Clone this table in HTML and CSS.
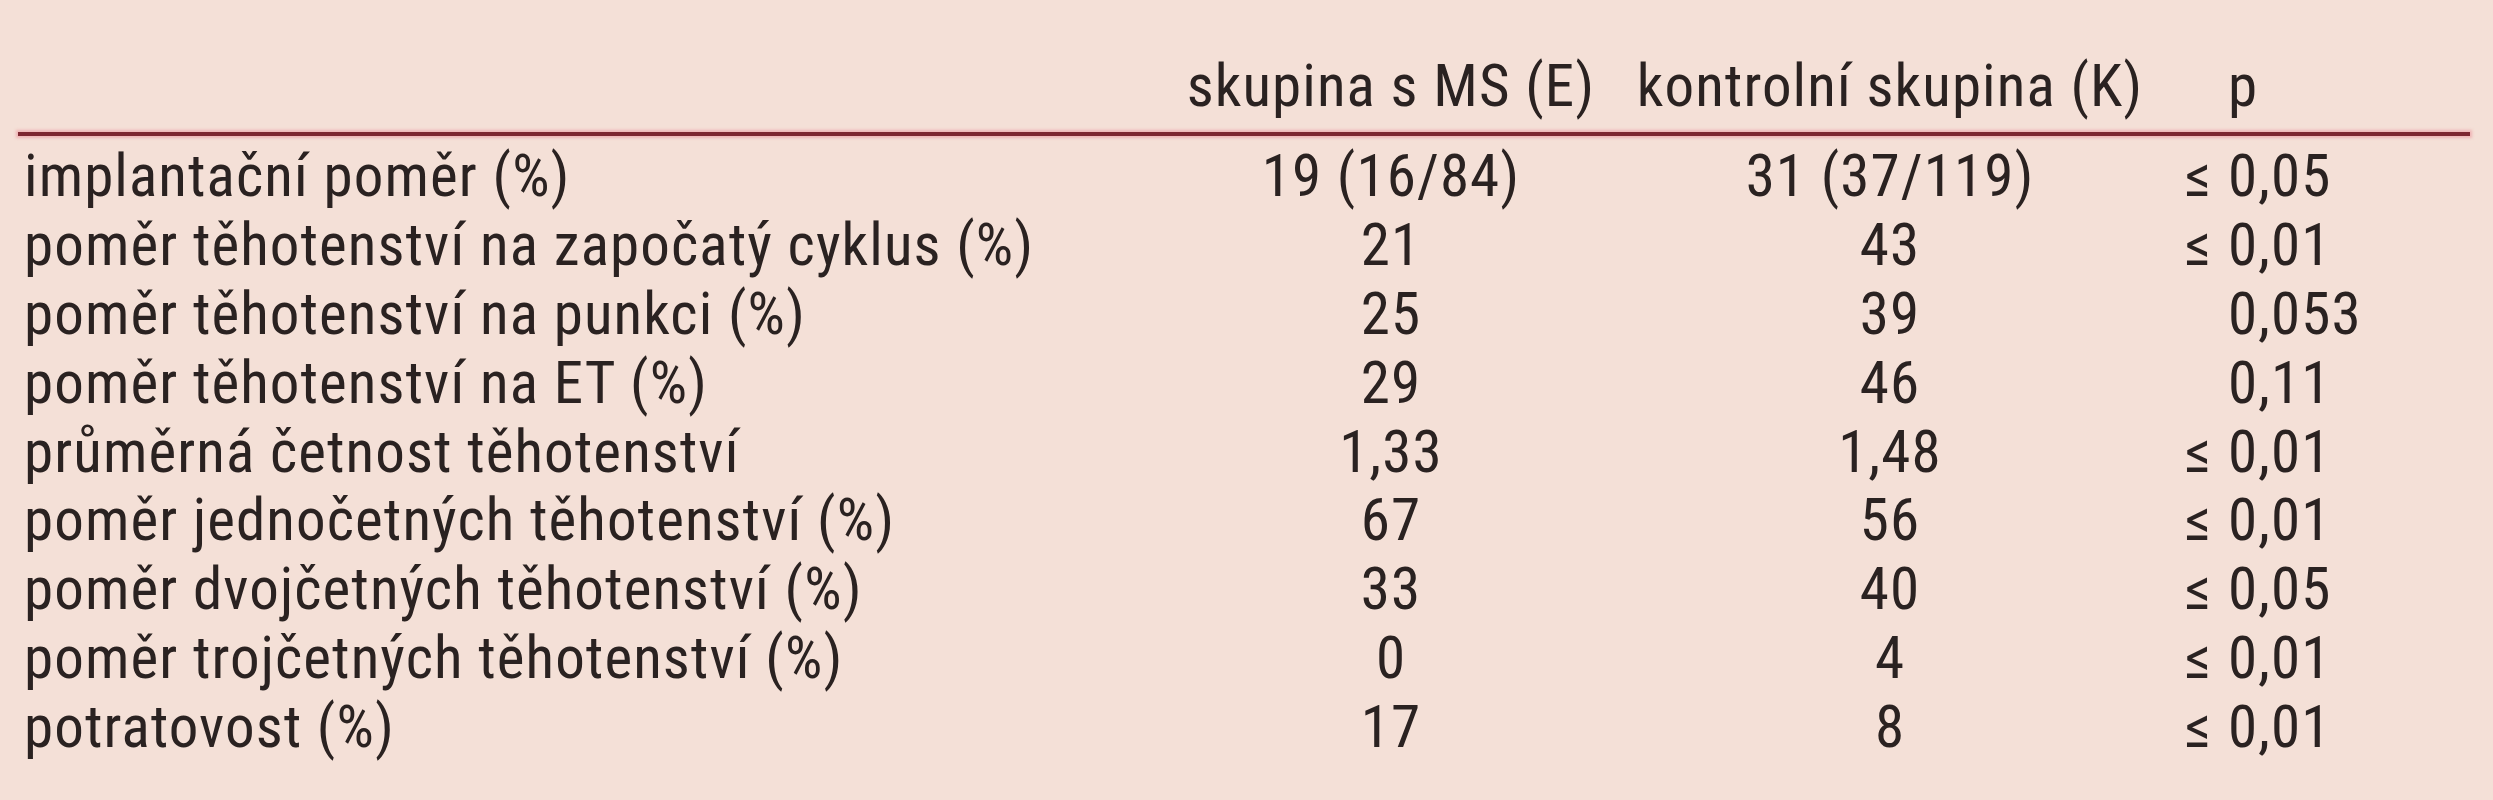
FILE: index.html
```html
<!DOCTYPE html>
<html lang="cs">
<head>
<meta charset="utf-8">
<title>Tabulka</title>
<link rel="stylesheet" href="styles.css">
</head>
<body>
<div class="table">
  <div class="row head">
    <div class="c1"></div>
    <div class="c2">skupina s MS (E)</div>
    <div class="c3">kontrolní skupina (K)</div>
    <div class="c4">p</div>
  </div>
  <div class="rule"></div>
  <div class="body">
    <div class="row"><div class="c1">implantační poměr (%)</div><div class="c2">19 (16/84)</div><div class="c3">31 (37/119)</div><div class="c4"><span class="le">≤</span>0,05</div></div>
    <div class="row"><div class="c1">poměr těhotenství na započatý cyklus (%)</div><div class="c2">21</div><div class="c3">43</div><div class="c4"><span class="le">≤</span>0,01</div></div>
    <div class="row"><div class="c1">poměr těhotenství na punkci (%)</div><div class="c2">25</div><div class="c3">39</div><div class="c4">0,053</div></div>
    <div class="row"><div class="c1">poměr těhotenství na ET (%)</div><div class="c2">29</div><div class="c3">46</div><div class="c4">0,11</div></div>
    <div class="row"><div class="c1">průměrná četnost těhotenství</div><div class="c2">1,33</div><div class="c3">1,48</div><div class="c4"><span class="le">≤</span>0,01</div></div>
    <div class="row"><div class="c1">poměr jednočetných těhotenství (%)</div><div class="c2">67</div><div class="c3">56</div><div class="c4"><span class="le">≤</span>0,01</div></div>
    <div class="row"><div class="c1">poměr dvojčetných těhotenství (%)</div><div class="c2">33</div><div class="c3">40</div><div class="c4"><span class="le">≤</span>0,05</div></div>
    <div class="row"><div class="c1">poměr trojčetných těhotenství (%)</div><div class="c2">0</div><div class="c3">4</div><div class="c4"><span class="le">≤</span>0,01</div></div>
    <div class="row"><div class="c1">potratovost (%)</div><div class="c2">17</div><div class="c3">8</div><div class="c4"><span class="le">≤</span>0,01</div></div>
  </div>
</div>
</body>
</html>
```

FILE: styles.css
```css
html, body {
  margin: 0;
  padding: 0;
  background: #f4e0d7;
}
body {
  width: 2493px;
  height: 800px;
  overflow: hidden;
  font-family: "Roboto Condensed", "Open Sans", sans-serif;
  font-weight: 400;
  font-size: 59px;
  letter-spacing: 1.1px;
  color: #2a2221;
}
.table {
  margin-left: 18px;
  width: 2452px;
  padding-top: 51px;
}
.row {
  display: grid;
  grid-template-columns: 1162px 422px 576px 292px;
  line-height: 69px;
  height: 69px;
  white-space: nowrap;
}
.body .row {
  line-height: 68.9px;
  height: 68.9px;
}
.head {
  margin-bottom: 12px;
}
.c1 {
  padding-left: 6px;
}
.c2, .c3 {
  text-align: center;
}
.c4 {
  padding-left: 50px;
}
.le {
  display: inline-block;
  width: 43px;
  margin-left: -43px;
}
.rule {
  height: 4px;
  background: #7e2630;
  box-shadow: 0 0 3px 2px rgba(236, 160, 165, 0.7);
  margin-bottom: 6px;
}
```
